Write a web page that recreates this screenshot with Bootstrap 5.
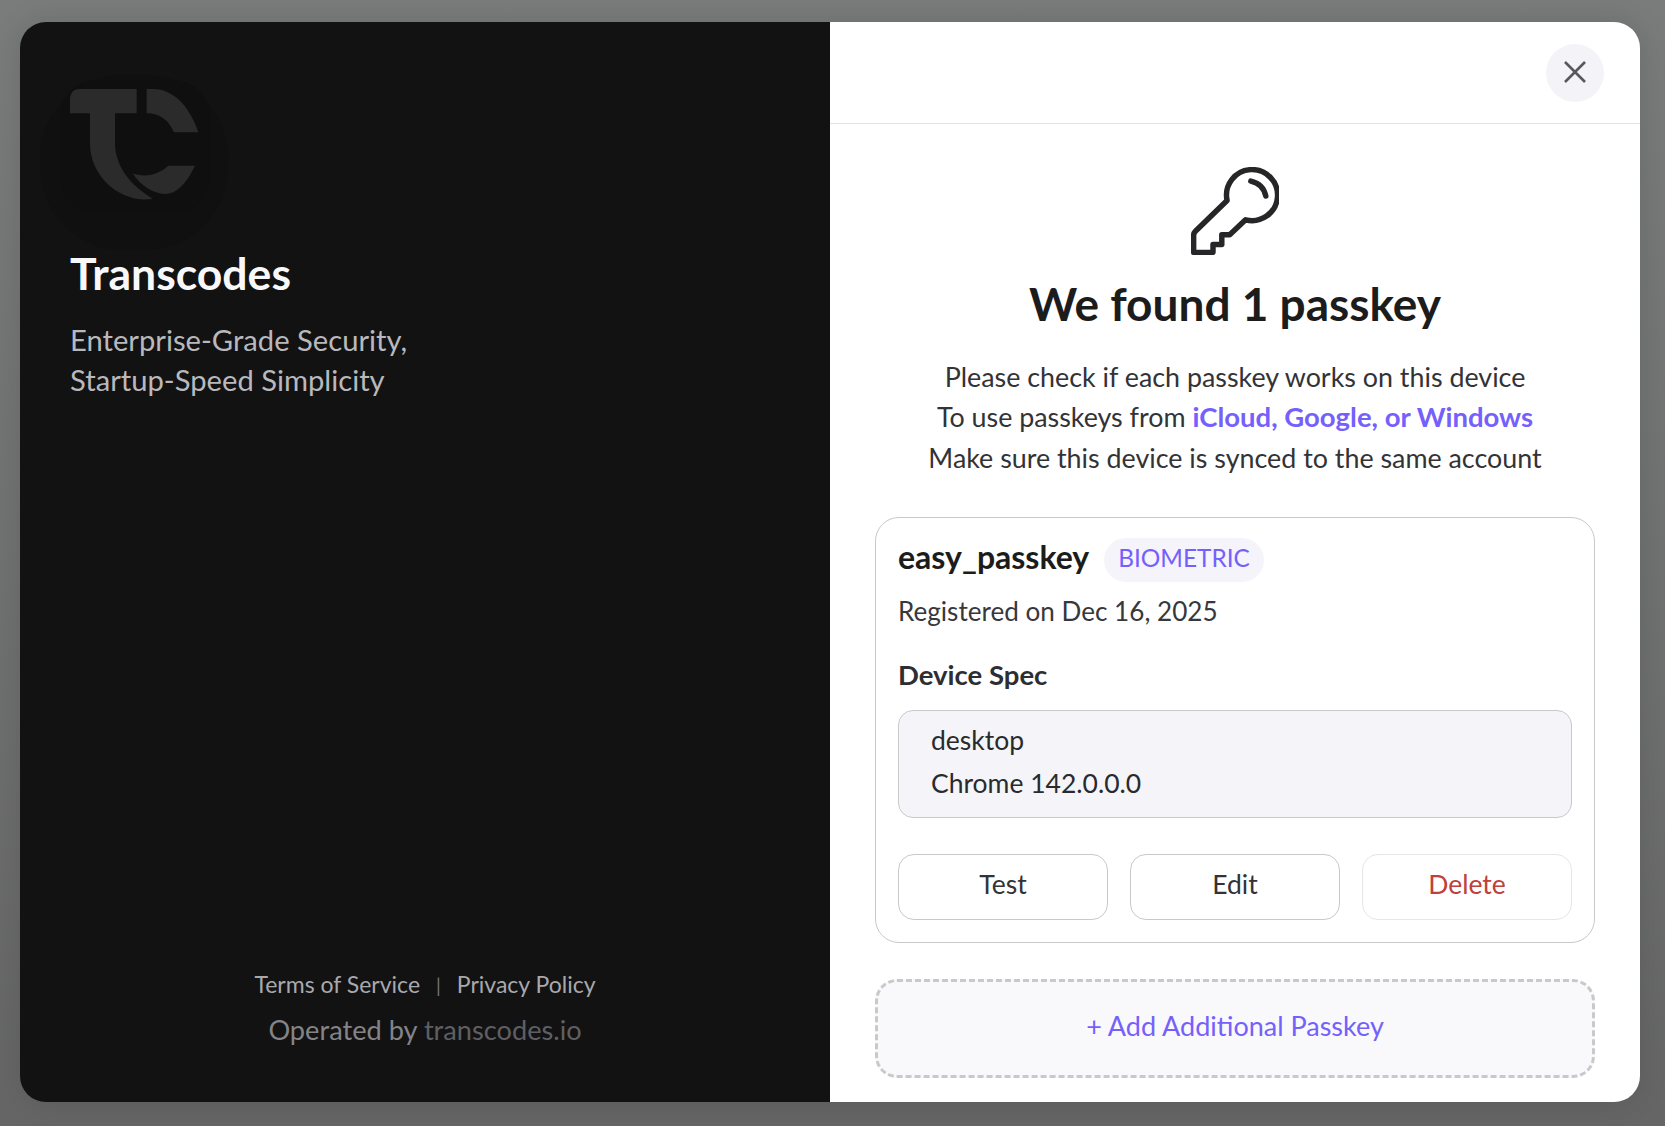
<!DOCTYPE html>
<html lang="en">
  <head>
    <meta charset="UTF-8" />
    <meta name="viewport" content="width=device-width, initial-scale=1.0" />
    <title>Transcodes passkeys</title>
    <link
      href="https://cdn.jsdelivr.net/npm/bootstrap@5.3.0/dist/css/bootstrap.min.css"
      rel="stylesheet"
    />
    <style>
      html, body {
        height: 100%;
      }
      body {
        background: linear-gradient(180deg, #7a7c7b 0%, #707271 50%, #656565 100%);
        padding: 22px 25px 24px 20px;
        font-family: "Lato", "Liberation Sans", sans-serif;
        overflow: hidden;
      }
      .tc-shell {
        height: 1080px;
        border-radius: 26px;
        overflow: hidden;
        box-shadow: 0 0 30px rgba(0, 0, 0, 0.12);
      }
      .tc-left {
        height: 1080px;
        background-color: #121212;
        padding: 0 50px 54px;
      }
      .tc-logo {
        display: block;
        width: 200px;
        height: 180px;
        margin: 48px 0 0 -30px;
      }
      .tc-brand {
        font-size: 44.5px;
        line-height: 48px;
        font-weight: 700;
        color: #f8f8fb;
        margin: -1px 0 0;
      }
      .tc-tagline {
        font-size: 29.2px;
        line-height: 40px;
        color: #b9b9bd;
        margin: 23px 0 0;
      }
      .tc-terms {
        font-size: 23px;
        line-height: 30px;
        color: #a9a9ad;
      }
      .tc-terms span {
        margin: 0 16px;
        font-size: 19px;
        color: #77777b;
      }
      .tc-operated {
        font-size: 27.2px;
        line-height: 36px;
        color: #848488;
        margin-top: 11px;
      }
      .tc-operated span {
        color: #5f5f63;
      }
      .tc-right {
        height: 1080px;
        background-color: #fff;
      }
      .tc-top {
        height: 102px;
        border-bottom: 1px solid #e4e4e7;
        padding: 22px 36px 0 0;
      }
      .tc-close {
        width: 58px;
        height: 58px;
        border: 0;
        padding: 0 0 2px;
        background-color: #f4f4f8;
      }
      .tc-main {
        padding: 0 45px;
      }
      .tc-key {
        display: block;
        width: 88px;
        height: 88px;
        margin: 43px auto 0;
      }
      .tc-heading {
        font-size: 46px;
        line-height: 60px;
        font-weight: 700;
        color: #1c1c1c;
        margin: 19px 0 0;
      }
      .tc-desc {
        font-size: 26.85px;
        line-height: 40.4px;
        color: #333336;
        margin: 23px 0 0;
      }
      .tc-desc strong {
        font-size: 27.5px;
        color: #7560fb;
        font-weight: 700;
      }
      .tc-card {
        height: 426px;
        margin-top: 39px;
        padding: 20px 22px 0;
        border: 1px solid #c9c9cc;
        border-radius: 24px;
      }
      .tc-name {
        font-size: 32px;
        line-height: 38px;
        font-weight: 700;
        color: #1c1c1c;
        padding-bottom: 6px;
      }
      .tc-type {
        font-size: 24.4px;
        line-height: 40px;
        font-weight: 400;
        padding: 0 14px 4px;
        margin-left: -1px;
        color: #7560fb;
        background-color: #f4f4fa;
      }
      .tc-date {
        font-size: 26.1px;
        line-height: 32px;
        color: #38383b;
        margin-top: 13px;
      }
      .tc-spec {
        font-size: 27.5px;
        line-height: 30px;
        font-weight: 700;
        color: #2e2e31;
        margin-top: 33px;
      }
      .tc-specbox {
        height: 108px;
        margin-top: 20px;
        padding: 8px 32px;
        font-size: 26.5px;
        line-height: 43px;
        color: #2a2a2d;
        background-color: #f4f4f9;
        border: 1px solid #c9c9cc;
        border-radius: 15px;
      }
      .tc-actions {
        margin-top: 36px;
        gap: 22px;
      }
      .tc-btn {
        height: 66px;
        font-size: 26.5px;
        padding-bottom: 10px;
        color: #333336;
        background-color: #fff;
        border: 1px solid #c9c9cc;
        border-radius: 16px;
      }
      .tc-btn-danger {
        color: #c0403a;
        border-color: #e6e6e8;
      }
      .tc-add {
        height: 99px;
        margin-top: 36px;
        font-size: 27px;
        padding-bottom: 10px;
        color: #7560fb;
        background-color: #f9f9fc;
        border: 3px dashed #c9c9cc;
        border-radius: 22px;
      }
    </style>
  </head>
  <body>
    <div class="row g-0 tc-shell">
      <div class="col-6 tc-left d-flex flex-column">
        <svg class="tc-logo" viewBox="0 0 600 540">
          <rect x="0" y="15" width="565" height="525" rx="250" fill="#101010" />
          <rect x="60" y="30" width="450" height="400" rx="110" fill="#0f0f0f" />
          <path
            fill="#2b2b2c"
            d="M90 130V85Q92 57 120 57H290V130H225V225C228 290 270 345 338 386Q322 389 300 388C215 378 150 305 150 220V130Z"
          />
          <path
            fill="#2b2b2c"
            d="M320 57H340C400 57 450 110 475 187H402C385 150 360 130 320 130Z"
          />
          <path
            fill="#2b2b2c"
            d="M278 310C310 322 350 318 385 287H465C440 340 410 372 375 372C340 372 300 345 278 310Z"
          />
        </svg>
        <h1 class="tc-brand">Transcodes</h1>
        <p class="tc-tagline">Enterprise-Grade Security,<br />Startup-Speed Simplicity</p>
        <div class="mt-auto text-center">
          <div class="tc-terms">Terms of Service<span>|</span>Privacy Policy</div>
          <div class="tc-operated">Operated by <span>transcodes.io</span></div>
        </div>
      </div>
      <div class="col-6 tc-right">
        <div class="tc-top d-flex justify-content-end">
          <button type="button" class="tc-close rounded-circle d-flex align-items-center justify-content-center" aria-label="Close">
            <svg width="24" height="24" viewBox="0 0 24 24" fill="none" stroke="#58585c" stroke-width="2.6">
              <path d="M2 2L22 22M22 2L2 22" />
            </svg>
          </button>
        </div>
        <div class="tc-main">
          <svg class="tc-key" viewBox="0 0 100 100" fill="none" stroke="#262628" stroke-width="6.2" stroke-linejoin="round" stroke-linecap="round">
            <path d="M41 38A29 29 0 1 1 62 60L44 77H35V88H25V97H3V78Q3 75 5 73L41 38Z" />
            <path d="M68 16Q82 19 85 33" />
          </svg>
          <h2 class="tc-heading text-center">We found 1 passkey</h2>
          <p class="tc-desc text-center">
            Please check if each passkey works on this device<br />
            To use passkeys from <strong>iCloud, Google, or Windows</strong><br />
            Make sure this device is synced to the same account
          </p>
          <div class="tc-card">
            <div class="d-flex align-items-center gap-3">
              <span class="tc-name">easy_passkey</span>
              <span class="badge rounded-pill tc-type">BIOMETRIC</span>
            </div>
            <div class="tc-date">Registered on Dec 16, 2025</div>
            <div class="tc-spec">Device Spec</div>
            <div class="tc-specbox">desktop<br />Chrome 142.0.0.0</div>
            <div class="tc-actions row g-0 flex-nowrap">
              <button type="button" class="btn col tc-btn">Test</button>
              <button type="button" class="btn col tc-btn">Edit</button>
              <button type="button" class="btn col tc-btn tc-btn-danger">Delete</button>
            </div>
          </div>
          <button type="button" class="btn w-100 tc-add">+ Add Additional Passkey</button>
        </div>
      </div>
    </div>
    <script src="https://cdn.jsdelivr.net/npm/bootstrap@5.3.0/dist/js/bootstrap.bundle.min.js"></script>
  </body>
</html>
